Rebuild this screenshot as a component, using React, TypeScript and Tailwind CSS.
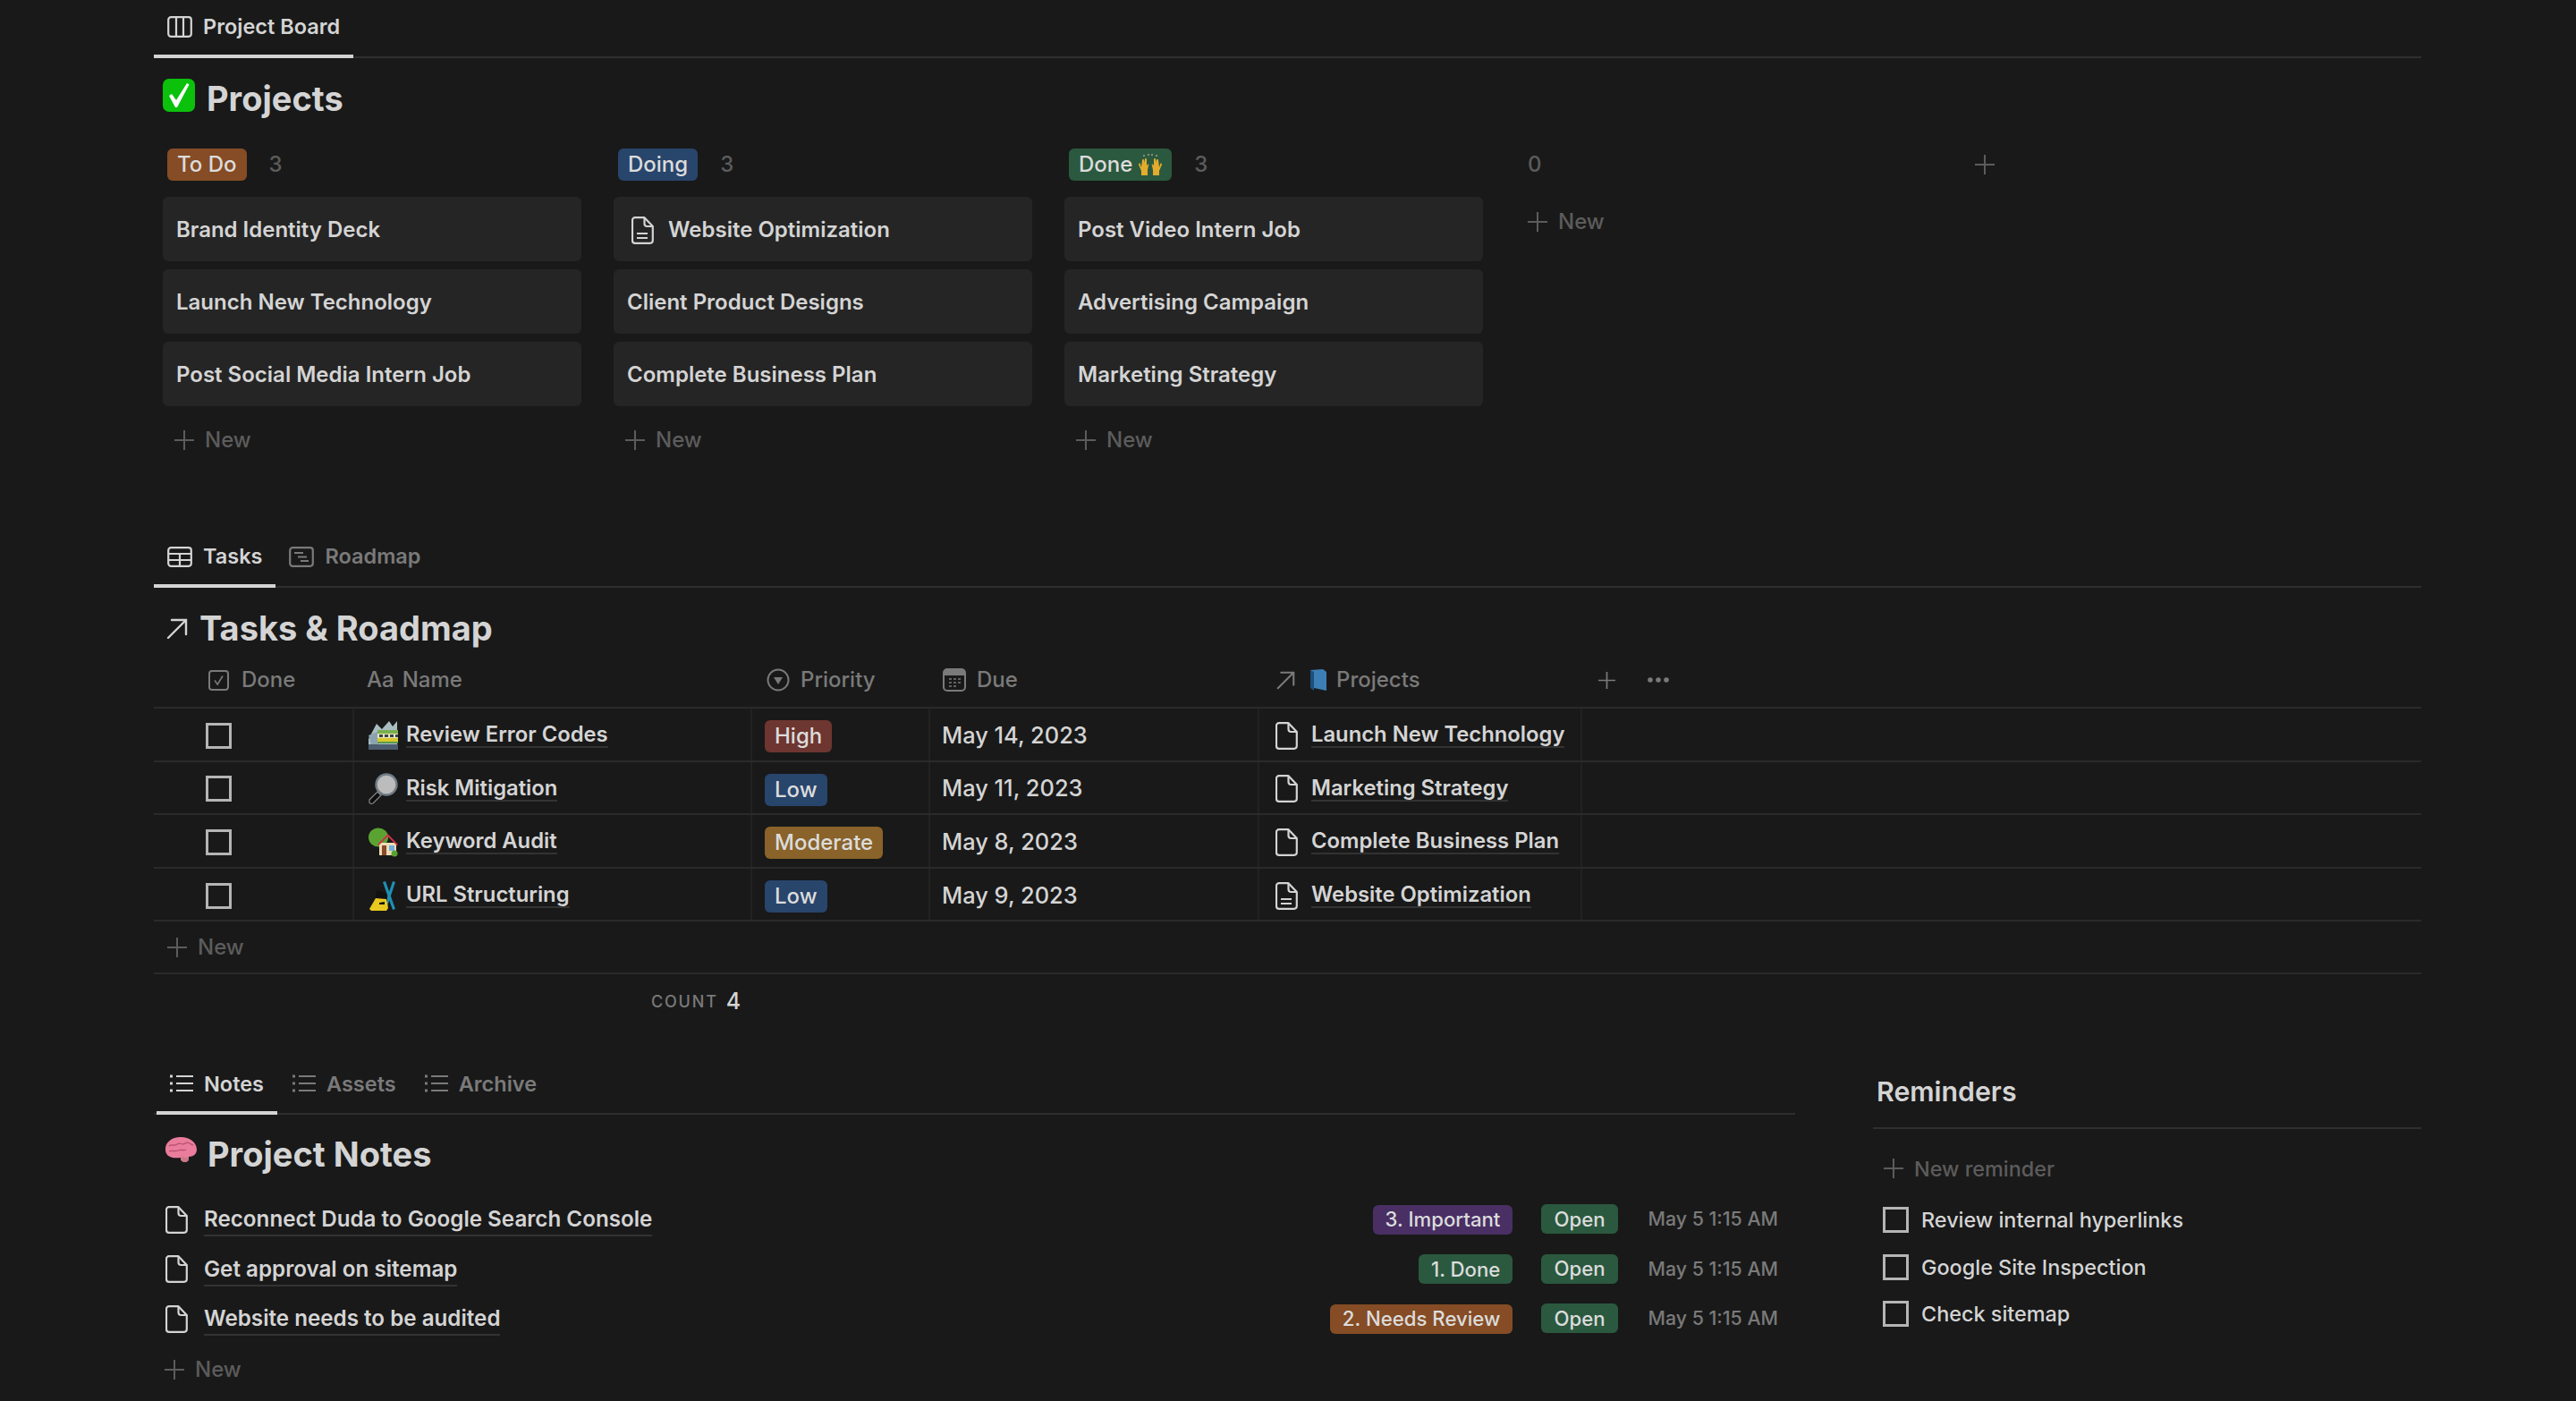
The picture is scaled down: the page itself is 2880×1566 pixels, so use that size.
import type { ReactNode } from "react";

// ---- icons ----
const BoardIcon = () => (
  <svg width="28" height="24" viewBox="0 0 28 24" fill="none" stroke="currentColor" strokeWidth="2.2">
    <rect x="1.2" y="1.2" width="25.6" height="21.6" rx="3" />
    <path d="M10 1.5v21M18 1.5v21" />
  </svg>
);
const TableIcon = () => (
  <svg width="28" height="23" viewBox="0 0 28 23" fill="none" stroke="currentColor" strokeWidth="2.2">
    <rect x="1.2" y="1.2" width="25.6" height="20.6" rx="3" />
    <path d="M1.5 8h25M1.5 15h25M14 8v14" />
  </svg>
);
const TimelineIcon = () => (
  <svg width="28" height="23" viewBox="0 0 28 23" fill="none" stroke="currentColor" strokeWidth="2.2">
    <rect x="1.2" y="1.2" width="25.6" height="20.6" rx="3" />
    <path d="M6 7h10M10 11.5h10M13 16h9" />
  </svg>
);
const ListIcon = () => (
  <svg width="26" height="22" viewBox="0 0 26 22" fill="none" stroke="currentColor" strokeWidth="2.2">
    <path d="M7 3h19M7 11h19M7 19h19" />
    <path d="M0 3h3M0 11h3M0 19h3" strokeWidth="3" />
  </svg>
);
const PageIcon = ({ lines = false }: { lines?: boolean }) => (
  <svg width="25" height="31" viewBox="0 0 25 31" fill="none" stroke="currentColor" strokeWidth="2.2" strokeLinejoin="round">
    <path d="M4 1.2h10.500L23.800 11v15.800a3 3 0 0 1-3 3H4a3 3 0 0 1-3-3V4.200a3 3 0 0 1 3-3z" />
    <path d="M14.500 1.500V8a3 3 0 0 0 3 3h6" />
    {lines && <path d="M6 19h12M6 24h12" strokeWidth="2" />}
  </svg>
);
const Plus = ({ size = 22 }: { size?: number }) => (
  <svg width={size} height={size} viewBox="0 0 22 22" fill="none" stroke="currentColor" strokeWidth="2">
    <path d="M11 0v22M0 11h22" />
  </svg>
);
const ArrowNE = ({ size = 24 }: { size?: number }) => (
  <svg width={size} height={size} viewBox="0 0 24 24" fill="none" stroke="currentColor" strokeWidth="2.400" strokeLinecap="round">
    <path d="M2 22L22 2M6 2h16v16" />
  </svg>
);
const CheckHeadIcon = () => (
  <svg width="23" height="23" viewBox="0 0 23 23" fill="none" stroke="currentColor" strokeWidth="2">
    <rect x="1" y="1" width="21" height="21" rx="3" />
    <path d="M7 11.500l3.200 4.500L16 6.500" strokeWidth="1.600" />
  </svg>
);
const SelectIcon = () => (
  <svg width="26" height="26" viewBox="0 0 26 26" fill="none" stroke="currentColor" strokeWidth="2">
    <circle cx="13" cy="13" r="11.500" />
    <path d="M8 10h10l-5 8z" fill="currentColor" stroke="none" />
  </svg>
);
const CalendarIcon = () => (
  <svg width="26" height="26" viewBox="0 0 26 26" fill="none">
    <rect x="1" y="1" width="24" height="24" rx="4" stroke="currentColor" strokeWidth="2" />
    <path d="M1 5a4 4 0 0 1 4-4h16a4 4 0 0 1 4 4v3H1z" fill="currentColor" />
    <path d="M7 12h3M12 12h3M17 12h3M7 16h3M12 16h3M17 16h3M7 20h3M12 20h3" stroke="currentColor" strokeWidth="1.600" />
  </svg>
);

// ---- emoji drawings, none of the installed fonts has colour emoji ----
const CheckEmoji = () => (
  <svg width="36" height="37" viewBox="0 0 36 37">
    <rect width="36" height="37" rx="7" fill="#0bc10b" />
    <path d="M7 19l3-2 5 7L27 5l2.500 1.500L16 32h-2z" fill="#fff" />
  </svg>
);
const HandsEmoji = () => (
  <svg width="26" height="24" viewBox="0 0 26 24">
    <g fill="#a0a090">
      <circle cx="6" cy="2" r="1" />
      <circle cx="11" cy="1" r="1" />
      <circle cx="15" cy="1" r="1" />
      <circle cx="20" cy="2" r="1" />
    </g>
    <path id="hand" d="M0 12c0-2 2-2 2 0l1 3 1-8c0-1.500 2-1.500 2 0v3l1-4c0-1.500 2-1.500 2 0v7l1-1c1-1 2 0 1 1l-1 5v6H3v-5z" fill="#e5ac2c" />
    <path d="M0 12c0-2 2-2 2 0l1 3 1-8c0-1.500 2-1.500 2 0v3l1-4c0-1.500 2-1.500 2 0v7l1-1c1-1 2 0 1 1l-1 5v6H3v-5z" fill="#e5ac2c" transform="matrix(-1 0 0 1 26 0)" />
  </svg>
);
const TramEmoji = () => (
  <svg width="33" height="32" viewBox="0 0 33 32">
    <path d="M0 20L9 3l6 6 8-9 4 6 5-6v26H0z" fill="#a9bcc2" />
    <path d="M0 16l10-4v14H3z" fill="#8ba3b0" />
    <rect x="10" y="10" width="23" height="4" fill="#78b04e" />
    <rect x="10" y="14" width="23" height="5" fill="#e9e3b4" />
    <g fill="#36454f">
      <rect x="12" y="15" width="4" height="3" />
      <rect x="18" y="15" width="4" height="3" />
      <rect x="24" y="15" width="4" height="3" />
      <rect x="30" y="15" width="3" height="3" />
    </g>
    <rect x="10" y="19" width="23" height="4" fill="#d8c830" />
    <rect x="10" y="23" width="23" height="2" fill="#5a9a4a" />
    <rect y="26" width="33" height="6" fill="#4b5d6e" />
  </svg>
);
const LensEmoji = () => (
  <svg width="33" height="35" viewBox="0 0 33 35">
    <path d="M1 30l9-9 4 4-9 9q-3 1-4-1z" fill="#0c0c0c" stroke="#8a8a8a" strokeWidth="1.200" />
    <circle cx="20" cy="13" r="11.500" fill="#bcbcbc" stroke="#717c86" strokeWidth="2.400" />
  </svg>
);
const HouseEmoji = () => (
  <svg width="33" height="33" viewBox="0 0 33 33">
    <ellipse cx="11" cy="11" rx="11" ry="10.500" fill="#5aa332" />
    <rect x="12" y="17" width="19" height="14" fill="#f0dcb4" />
    <path d="M10 19L21.500 7 33 19l-1.500 1L21.500 10 11.500 20z" fill="#cc3344" />
    <rect x="15" y="20" width="5" height="11" fill="#8a4a2c" />
    <rect x="23" y="20" width="6" height="6" fill="#72aee0" />
    <circle cx="29" cy="29" r="3.500" fill="#5aa332" />
  </svg>
);
const SkiEmoji = () => (
  <svg width="33" height="35" viewBox="0 0 33 35">
    <path d="M16 2l3-1 11 31-3 1z" fill="#1f8fb5" />
    <path d="M27 1l3 1-10 30-3-1z" fill="#1f8fb5" />
    <path d="M8 13l3-2 9 4 1 8H8z" fill="#111" />
    <path d="M8 20l12 1 2 10-2 3H3l-2-2z" fill="#e9c920" />
    <path d="M12 25l6-1v3h-6z" fill="#111" />
  </svg>
);
const BrainEmoji = () => (
  <svg width="36" height="29" viewBox="0 0 36 29">
    <path d="M1 15C0 6 8 0 18 0c10 0 18 6 18 14 0 5-4 8-9 8v3c-1 4-8 4-9 0v-2c-8 1-16 0-17-8z" fill="#ea7c9c" />
    <path d="M5 10c4-3 5 1 9-2s5 2 9-1 6 2 9 2M5 16c4-2 6 1 10-1s6 1 9-1" stroke="#b94f72" strokeWidth="1.300" fill="none" />
    <path d="M19 21c2 2 6 3 8 1v3c-1 4-7 4-8 0z" fill="#c97a85" />
  </svg>
);
const BookEmoji = () => (
  <svg width="18" height="24" viewBox="0 0 18 24">
    <path d="M0 1l14-1 4 3v21l-14-3z" fill="#3c7fb5" />
    <path d="M0 1l4 2v21l-4-3z" fill="#1d4f7a" />
  </svg>
);

// ---- shared bits ----
type TabItem = { label: string; icon: ReactNode; active?: boolean };

function TabBar({ tabs, className = "" }: { tabs: TabItem[]; className?: string }) {
  return (
    <div className={`flex h-[65px] border-b-[2px] border-[#2f2f2f] ${className}`}>
      {tabs.map((t) => (
        <div
          key={t.label}
          className={`-mb-[2px] flex h-[65px] items-center gap-[12px] border-b-[4px] px-[15px] pb-[1px] text-[23.500px] font-semibold ${
            t.active ? "border-[#d4d4d4] text-[#d4d4d4]" : "border-transparent text-[#7a7a7a]"
          }`}
        >
          {t.icon}
          <span>{t.label}</span>
        </div>
      ))}
    </div>
  );
}

function Pill({ text, color, children }: { text: string; color: string; children?: ReactNode }) {
  return (
    <span className={`inline-flex h-[36px] items-center gap-[7px] rounded-[6px] px-[11px] text-[24px] font-medium text-[#dcdcdc] ${color}`}>
      {text}
      {children}
    </span>
  );
}

function SmallPill({ text, color }: { text: string; color: string }) {
  return <span className={`inline-flex h-[33px] items-center rounded-[6px] px-[14px] text-[22.200px] font-medium text-[#dcdcdc] ${color}`}>{text}</span>;
}

function Linked({ children, className = "" }: { children: ReactNode; className?: string }) {
  return <span className={`border-b-[2px] border-[#333] font-semibold text-[#d4d4d4] ${className}`}>{children}</span>;
}

function NewRow({ className = "", label = "New", textClass = "text-[24px]" }: { className?: string; label?: string; textClass?: string }) {
  return (
    <div className={`flex h-[36px] items-center gap-[12px] font-medium text-[#5c5c5c] ${textClass} ${className}`}>
      <Plus />
      <span>{label}</span>
    </div>
  );
}

function Box() {
  return <span className="block h-[29px] w-[29px] border-[3px] border-[#b5b5b5]" />;
}

// ---- data ----
const columns = [
  {
    label: "To Do",
    color: "bg-[#854c25]",
    cards: ["Brand Identity Deck", "Launch New Technology", "Post Social Media Intern Job"],
  },
  {
    label: "Doing",
    color: "bg-[#28456c]",
    cards: ["Website Optimization", "Client Product Designs", "Complete Business Plan"],
  },
  {
    label: "Done",
    color: "bg-[#2b593f]",
    cards: ["Post Video Intern Job", "Advertising Campaign", "Marketing Strategy"],
  },
];

const tasks = [
  { emoji: <TramEmoji />, name: "Review Error Codes", pri: "High", priColor: "bg-[#6e3630]", due: "May 14, 2023", project: "Launch New Technology", lines: false },
  { emoji: <LensEmoji />, name: "Risk Mitigation", pri: "Low", priColor: "bg-[#28456c]", due: "May 11, 2023", project: "Marketing Strategy", lines: false },
  { emoji: <HouseEmoji />, name: "Keyword Audit", pri: "Moderate", priColor: "bg-[#89632a]", due: "May 8, 2023", project: "Complete Business Plan", lines: false },
  { emoji: <SkiEmoji />, name: "URL Structuring", pri: "Low", priColor: "bg-[#28456c]", due: "May 9, 2023", project: "Website Optimization", lines: true },
];

const notes = [
  { title: "Reconnect Duda to Google Search Console", tag: "3. Important", tagColor: "bg-[#492f64]" },
  { title: "Get approval on sitemap", tag: "1. Done", tagColor: "bg-[#2b593f]" },
  { title: "Website needs to be audited", tag: "2. Needs Review", tagColor: "bg-[#854c25]" },
];

const reminders = ["Review internal hyperlinks", "Google Site Inspection", "Check sitemap"];

export default function App() {
  return (
    <div className="h-[1566px] w-[2880px] overflow-hidden bg-[#191919] pl-[172px] [font-family:Inter,sans-serif] text-[#d4d4d4]">
      <div className="w-[2535px]">
        {/* Project board */}
        <TabBar tabs={[{ label: "Project Board", icon: <BoardIcon />, active: true }]} />
        <div className="mb-[11px] flex h-[90px] items-center gap-[13px] pl-[10px]">
          <span className="-mt-[8px]">
            <CheckEmoji />
          </span>
          <h1 className="text-[38px] font-bold">Projects</h1>
        </div>

        <div className="flex gap-[36px] pl-[10px]">
          {columns.map((col) => (
            <div key={col.label} className="w-[468px]">
              <div className="flex h-[36px] items-center gap-[25px] pl-[5px] text-[24px] font-medium text-[#5c5c5c]">
                <Pill text={col.label} color={col.color}>
                  {col.label === "Done" && <HandsEmoji />}
                </Pill>
                <span>3</span>
              </div>
              <div className="mt-[18px] flex flex-col gap-[9px]">
                {col.cards.map((c) => (
                  <div key={c} className="flex h-[72px] items-center gap-[16px] rounded-[6px] bg-[#252525] px-[15px] pt-[2px] text-[24px] font-semibold">
                    {c === "Website Optimization" && (
                      <span className="ml-[5px]">
                        <PageIcon lines />
                      </span>
                    )}
                    <span>{c}</span>
                  </div>
                ))}
              </div>
              <NewRow className="mt-[20px] pl-[13px]" />
            </div>
          ))}
          <div className="w-[468px]">
            <div className="flex h-[36px] items-center pl-[14px] text-[24px] font-medium text-[#5c5c5c]">0</div>
            <NewRow className="mt-[28px] pl-[14px]" />
          </div>
          <div className="flex h-[36px] items-center pl-[10px] text-[#5c5c5c]">
            <Plus />
          </div>
        </div>

        {/* Tasks */}
        <div className="mt-[82px]">
          <TabBar
            tabs={[
              { label: "Tasks", icon: <TableIcon />, active: true },
              { label: "Roadmap", icon: <TimelineIcon /> },
            ]}
          />
        </div>
        <div className="flex h-[71px] items-center gap-[13px] pt-[20px] pl-[14px]">
          <ArrowNE />
          <h2 className="text-[38px] font-bold">Tasks &amp; Roadmap</h2>
        </div>

        <div className="flex h-[64px] items-center border-b-[2px] border-[#2a2a2a] pt-[2px] text-[24px] font-medium text-[#7a7a7a]">
          <div className="flex w-[224px] items-center gap-[14px] pl-[61px]">
            <CheckHeadIcon />
            <span>Done</span>
          </div>
          <div className="flex w-[445px] items-center gap-[9px] pl-[14px]">
            <span>Aa</span>
            <span>Name</span>
          </div>
          <div className="flex w-[199px] items-center gap-[12px] pl-[16px]">
            <SelectIcon />
            <span>Priority</span>
          </div>
          <div className="flex w-[368px] items-center gap-[12px] pl-[14px]">
            <CalendarIcon />
            <span>Due</span>
          </div>
          <div className="flex w-[361px] items-center gap-[17px] pl-[19px]">
            <ArrowNE size={21} />
            <span className="flex items-center gap-[11px]">
              <BookEmoji />
              Projects
            </span>
          </div>
          <div className="flex items-center gap-[36px] pl-[18px]">
            <Plus size={19} />
            <svg width="24" height="6" viewBox="0 0 24 6" fill="currentColor">
              <circle cx="3" cy="3" r="2.800" />
              <circle cx="12" cy="3" r="2.800" />
              <circle cx="21" cy="3" r="2.800" />
            </svg>
          </div>
        </div>

        {tasks.map((t) => (
          <div key={t.name} className="flex h-[59.600px] items-stretch border-b-[2px] border-[#2a2a2a] text-[23.800px]">
            <div className="flex w-[224px] items-center border-r-[2px] border-[#222] pt-[3px] pl-[58px]">
              <Box />
            </div>
            <div className="flex w-[445px] items-center gap-[9px] border-r-[2px] border-[#222] pt-[3px] pl-[16px]">
              {t.emoji}
              <Linked className="leading-[26px]">{t.name}</Linked>
            </div>
            <div className="flex w-[199px] items-center border-r-[2px] border-[#222] pt-[5px] pl-[14px]">
              <Pill text={t.pri} color={t.priColor} />
            </div>
            <div className="flex w-[368px] items-center border-r-[2px] border-[#222] pt-[2px] pl-[13px] text-[25.400px] font-medium">{t.due}</div>
            <div className="flex w-[361px] items-center gap-[15px] border-r-[2px] border-[#222] pt-[3px] pl-[18px]">
              <PageIcon lines={t.lines} />
              <Linked className="leading-[26px]">{t.project}</Linked>
            </div>
          </div>
        ))}
        <div className="flex h-[59px] items-center border-b-[2px] border-[#2a2a2a] pl-[15px]">
          <NewRow />
        </div>
        <div className="flex h-[61px] items-center gap-[9px] pl-[556px]">
          <span className="text-[18px] font-medium tracking-[0.1em] text-[#7a7a7a]">COUNT</span>
          <span className="text-[25px] font-medium">4</span>
        </div>

        {/* Notes and reminders */}
        <div className="mt-[31px] flex gap-[87px]">
          <div className="w-[1835px]">
            <TabBar
              className="gap-[2px] pl-[3px]"
              tabs={[
                { label: "Notes", icon: <ListIcon />, active: true },
                { label: "Assets", icon: <ListIcon /> },
                { label: "Archive", icon: <ListIcon /> },
              ]}
            />
            <div className="flex h-[89px] items-center gap-[12px] pl-[12px]">
              <span className="-mt-[10px]">
                <BrainEmoji />
              </span>
              <h2 className="text-[38px] font-bold">Project Notes</h2>
            </div>
            <div className="flex flex-col">
              {notes.map((n) => (
                <div key={n.title} className="flex h-[55.500px] items-center pr-[19px] text-[24.200px]">
                  <span className="mr-[18px] ml-[13px]">
                    <PageIcon />
                  </span>
                  <Linked className="border-[#2b2b2b] pt-[6px] pb-[4px] leading-[26px]">{n.title}</Linked>
                  <div className="ml-auto flex items-center">
                    <SmallPill text={n.tag} color={n.tagColor} />
                    <span className="ml-[32px]">
                      <SmallPill text="Open" color="bg-[#2b593f]" />
                    </span>
                    <span className="ml-[34px] text-[21.300px] font-medium text-[#7a7a7a]">May 5 1:15 AM</span>
                  </div>
                </div>
              ))}
            </div>
            <NewRow className="mt-[11px] pl-[12px]" />
          </div>

          <div className="flex-1">
            <h3 className="flex h-[81px] items-center border-b-[2px] border-[#2f2f2f] pl-[4px] text-[30.300px] font-semibold">Reminders</h3>
            <NewRow className="mt-[26px] pl-[12px]" label="New reminder" textClass="text-[23.400px]" />
            <div className="mt-[13px] flex flex-col">
              {reminders.map((r) => (
                <div key={r} className="flex h-[52.500px] items-center gap-[14px] pl-[11px] text-[23.400px] font-medium">
                  <Box />
                  <span>{r}</span>
                </div>
              ))}
            </div>
          </div>
        </div>
      </div>
    </div>
  );
}
